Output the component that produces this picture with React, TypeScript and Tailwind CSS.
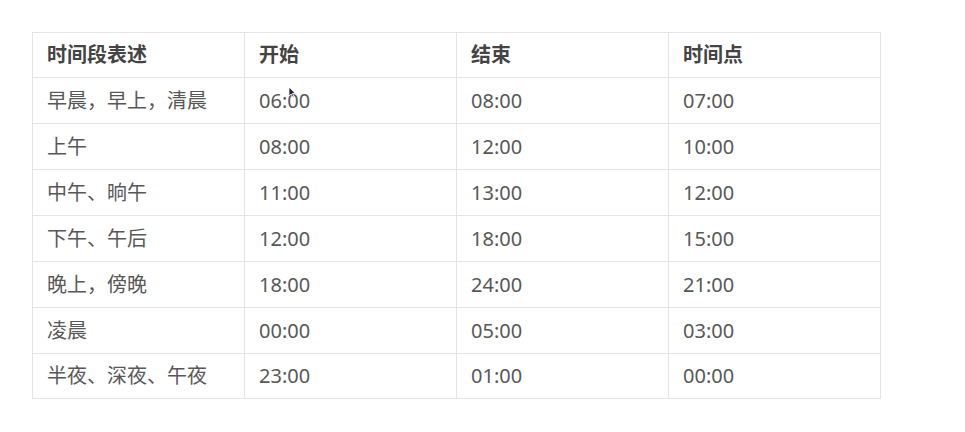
const header = ["时间段表述", "开始", "结束", "时间点"];

const rows = [
  ["早晨，早上，清晨", "06:00", "08:00", "07:00"],
  ["上午", "08:00", "12:00", "10:00"],
  ["中午、晌午", "11:00", "13:00", "12:00"],
  ["下午、午后", "12:00", "18:00", "15:00"],
  ["晚上，傍晚", "18:00", "24:00", "21:00"],
  ["凌晨", "00:00", "05:00", "03:00"],
  ["半夜、深夜、午夜", "23:00", "01:00", "00:00"],
];

const App = () => {
  return (
    <div
      className="min-h-screen bg-white pl-8 pt-8"
      style={{ fontFamily: '"Noto Sans", "Noto Sans CJK SC", sans-serif' }}
    >
      <div className="relative w-[848px]">
        <table className="w-[848px] table-fixed border-collapse border border-[#e4e4e4] text-[20px] text-[#585858]">
          <thead>
            <tr>
              {header.map((h) => (
                <th
                  key={h}
                  className="h-[45px] w-[212px] border border-[#e4e4e4] px-[14px] text-left align-middle font-bold text-[#444]"
                >
                  {h}
                </th>
              ))}
            </tr>
          </thead>
          <tbody>
            {rows.map((r, ri) => (
              <tr key={r[0]}>
                {r.map((c, i) => (
                  <td
                    key={i}
                    className={
                      (ri === rows.length - 1 ? "h-[45px] " : "h-[46px] ") +
                      "border border-[#e4e4e4] px-[14px] align-middle font-normal"
                    }
                  >
                    {c}
                  </td>
                ))}
              </tr>
            ))}
          </tbody>
        </table>
        {/* mouse cursor */}
        <svg
          className="absolute left-[256px] top-[54px]"
          width="8"
          height="12"
          viewBox="0 0 8 12"
        >
          <path d="M1 1 L1 10 L3.2 8 L4.8 11.2 L6 10.6 L4.5 7.5 L7.2 7.4 Z" fill="#222" stroke="#fff" strokeWidth="0.8" />
        </svg>
      </div>
    </div>
  );
};

export default App;
